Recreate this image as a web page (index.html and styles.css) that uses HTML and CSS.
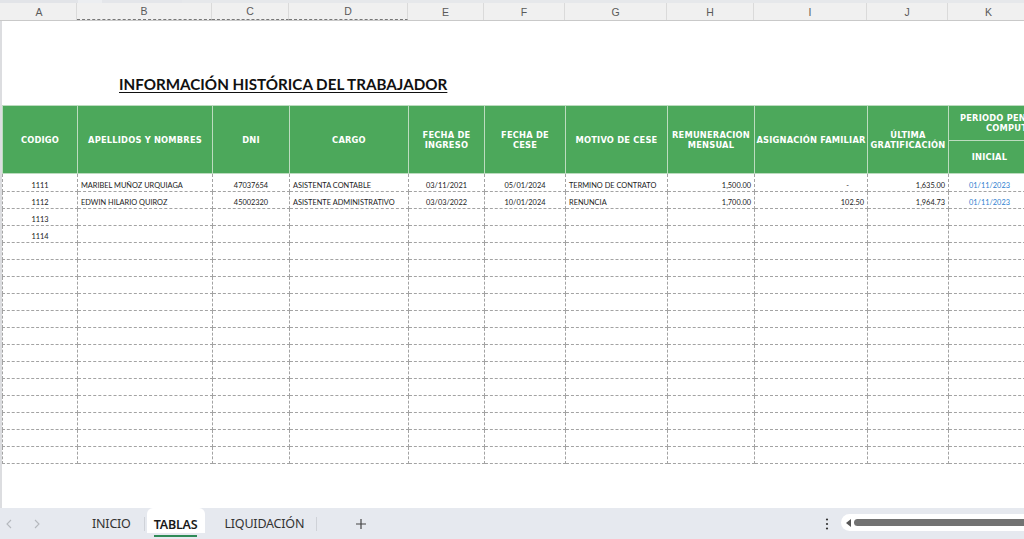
FILE: index.html
```html
<!DOCTYPE html>
<html lang="es">
<head>
<meta charset="utf-8">
<title>Tablas</title>
<link rel="stylesheet" href="styles.css">
</head>
<body>
<div class="app">
  <div class="topstrip"><span class="ts-a"></span><span class="ts-b"></span><span class="ts-c"></span></div>
  <div class="colhead">
    <div class="ch">A</div><div class="ch mark">B</div><div class="ch mark">C</div><div class="ch mark">D</div><div class="ch">E</div><div class="ch">F</div><div class="ch">G</div><div class="ch">H</div><div class="ch">I</div><div class="ch">J</div><div class="ch">K</div><div class="ch">L</div>
  </div>
  <div class="sheet">
    <div class="titlebox"><h1 class="title">INFORMACIÓN HISTÓRICA DEL TRABAJADOR</h1></div>
    <table class="grid">
      <colgroup>
        <col class="w-a"><col class="w-b"><col class="w-c"><col class="w-d"><col class="w-e"><col class="w-f"><col class="w-g"><col class="w-h"><col class="w-i"><col class="w-j"><col class="w-k"><col class="w-l">
      </colgroup>
      <thead>
        <tr class="h1">
          <th rowspan="2">CODIGO</th>
          <th rowspan="2">APELLIDOS Y NOMBRES</th>
          <th rowspan="2">DNI</th>
          <th rowspan="2">CARGO</th>
          <th rowspan="2">FECHA DE<br>INGRESO</th>
          <th rowspan="2">FECHA DE<br>CESE</th>
          <th rowspan="2">MOTIVO DE CESE</th>
          <th rowspan="2">REMUNERACION<br>MENSUAL</th>
          <th rowspan="2">ASIGNACIÓN FAMILIAR</th>
          <th rowspan="2">ÚLTIMA<br>GRATIFICACIÓN</th>
          <th colspan="2">PERIODO PENDIENTE DE<br>COMPUTABLE</th>
        </tr>
        <tr class="h2">
          <th>INICIAL</th>
          <th>FINAL</th>
        </tr>
      </thead>
      <tbody>
        <tr class="first">
          <td class="c">1111</td><td>MARIBEL MUÑOZ URQUIAGA</td><td class="c">47037654</td><td>ASISTENTA CONTABLE</td><td class="c">03/11/2021</td><td class="c">05/01/2024</td><td>TERMINO DE CONTRATO</td><td class="r">1,500.00</td><td class="r dash">-</td><td class="r">1,635.00</td><td class="c blue">01/11/2023</td><td></td>
        </tr>
        <tr>
          <td class="c">1112</td><td>EDWIN HILARIO QUIROZ</td><td class="c">45002320</td><td>ASISTENTE ADMINISTRATIVO</td><td class="c">03/03/2022</td><td class="c">10/01/2024</td><td>RENUNCIA</td><td class="r">1,700.00</td><td class="r">102.50</td><td class="r">1,964.73</td><td class="c blue">01/11/2023</td><td></td>
        </tr>
        <tr><td class="c">1113</td><td></td><td></td><td></td><td></td><td></td><td></td><td></td><td></td><td></td><td></td><td></td></tr>
        <tr><td class="c">1114</td><td></td><td></td><td></td><td></td><td></td><td></td><td></td><td></td><td></td><td></td><td></td></tr>
        <tr><td></td><td></td><td></td><td></td><td></td><td></td><td></td><td></td><td></td><td></td><td></td><td></td></tr>
        <tr><td></td><td></td><td></td><td></td><td></td><td></td><td></td><td></td><td></td><td></td><td></td><td></td></tr>
        <tr><td></td><td></td><td></td><td></td><td></td><td></td><td></td><td></td><td></td><td></td><td></td><td></td></tr>
        <tr><td></td><td></td><td></td><td></td><td></td><td></td><td></td><td></td><td></td><td></td><td></td><td></td></tr>
        <tr><td></td><td></td><td></td><td></td><td></td><td></td><td></td><td></td><td></td><td></td><td></td><td></td></tr>
        <tr><td></td><td></td><td></td><td></td><td></td><td></td><td></td><td></td><td></td><td></td><td></td><td></td></tr>
        <tr><td></td><td></td><td></td><td></td><td></td><td></td><td></td><td></td><td></td><td></td><td></td><td></td></tr>
        <tr><td></td><td></td><td></td><td></td><td></td><td></td><td></td><td></td><td></td><td></td><td></td><td></td></tr>
        <tr><td></td><td></td><td></td><td></td><td></td><td></td><td></td><td></td><td></td><td></td><td></td><td></td></tr>
        <tr><td></td><td></td><td></td><td></td><td></td><td></td><td></td><td></td><td></td><td></td><td></td><td></td></tr>
        <tr><td></td><td></td><td></td><td></td><td></td><td></td><td></td><td></td><td></td><td></td><td></td><td></td></tr>
        <tr><td></td><td></td><td></td><td></td><td></td><td></td><td></td><td></td><td></td><td></td><td></td><td></td></tr>
        <tr><td></td><td></td><td></td><td></td><td></td><td></td><td></td><td></td><td></td><td></td><td></td><td></td></tr>
      </tbody>
    </table>
  </div>
  <div class="tabbar">
    <div class="nav">
      <svg width="10" height="12" viewBox="0 0 10 12"><path d="M7 2 L3 6 L7 10" fill="none" stroke="#b5b8bd" stroke-width="1.1"/></svg>
      <svg width="10" height="12" viewBox="0 0 10 12"><path d="M3 2 L7 6 L3 10" fill="none" stroke="#b5b8bd" stroke-width="1.1"/></svg>
    </div>
    <div class="tab">INICIO</div>
    <div class="sep"></div>
    <div class="tab active"><span>TABLAS</span></div>
    <div class="tab">LIQUIDACIÓN</div>
    <div class="sep"></div>
    <div class="add">
      <svg width="12" height="12" viewBox="0 0 12 12"><path d="M6 1 V11 M1 6 H11" stroke="#444" stroke-width="1.2"/></svg>
    </div>
    <div class="spacer"></div>
    <div class="more">
      <svg width="4" height="14" viewBox="0 0 4 14"><circle cx="2" cy="2.5" r="1.1" fill="#333"/><circle cx="2" cy="7" r="1.1" fill="#333"/><circle cx="2" cy="11.5" r="1.1" fill="#333"/></svg>
    </div>
    <div class="hscroll">
      <svg width="6" height="8" viewBox="0 0 6 8"><path d="M5 0 L0 4 L5 8 Z" fill="#555"/></svg>
      <div class="thumb"></div>
    </div>
  </div>
</div>
</body>
</html>
```
FILE: styles.css
```css
html, body {
  margin: 0;
  padding: 0;
  width: 1024px;
  height: 539px;
  overflow: hidden;
  background: #ffffff;
}
.app {
  display: flex;
  flex-direction: column;
  width: 1024px;
  height: 539px;
  overflow: hidden;
}
.topstrip {
  height: 3px;
  display: flex;
  background: #e6e8eb;
  flex: none;
}
.ts-a { width: 78px; background: #e2e4e8; }
.ts-b { width: 24px; background: #eceef1; }
.ts-c { width: 80px; background: #e4e6ea; }

.colhead {
  flex: none;
  height: 17px;
  display: grid;
  grid-template-columns: 75px 135px 77px 119px 76px 81px 102px 87px 113px 81px 82px 58px;
  padding-left: 2px;
  background: #f0f0f0;
  border-bottom: 1px solid #c9c9c9;
  font-family: "Liberation Sans", Arial, sans-serif;
  font-size: 10.5px;
  color: #5a5a5a;
}
.ch {
  display: flex;
  align-items: center;
  justify-content: center;
  border-right: 1px solid #dadada;
  box-sizing: border-box;
}
.ch.mark {
  border-bottom: 1px dashed #777;
}

.sheet {
  flex: 1;
  background: #fff;
  border-left: 2px solid #dcdde0;
  overflow: hidden;
}
.titlebox {
  height: 84px;
  box-sizing: border-box;
  padding: 53px 0 0 117px;
}
.title {
  margin: 0;
  font-family: Lato, "Open Sans", sans-serif;
  font-weight: 700;
  font-size: 15.2px;
  line-height: 20px;
  color: #111;
  text-decoration: underline;
  text-decoration-thickness: 1px;
  text-underline-offset: 2px;
}

.grid {
  table-layout: fixed;
  border-collapse: collapse;
  width: 1086px;
}
.w-a { width: 75px; }
.w-b { width: 135px; }
.w-c { width: 77px; }
.w-d { width: 119px; }
.w-e { width: 76px; }
.w-f { width: 81px; }
.w-g { width: 102px; }
.w-h { width: 87px; }
.w-i { width: 113px; }
.w-j { width: 81px; }
.w-k { width: 82px; }
.w-l { width: 58px; }

.grid th {
  background: #4ca85b;
  color: #fff;
  font-family: "DejaVu Sans", Verdana, sans-serif;
  font-weight: 700;
  font-size: 8.3px;
  line-height: 10px;
  letter-spacing: 0.2px;
  text-align: center;
  vertical-align: middle;
  border: 1px solid #bcdcbf;
  padding: 0;
  white-space: nowrap;
  overflow: hidden;
}
.h1 { height: 35px; }
.h2 { height: 33px; }

.grid td {
  height: 16px;
  border: 1px dashed #a3a3a3;
  font-family: Lato, "Open Sans", sans-serif;
  font-size: 7.4px;
  color: #222;
  padding: 0 3px 0 3px;
  vertical-align: bottom;
  line-height: 10px;
  white-space: nowrap;
  overflow: hidden;
}
.grid tr.first td { height: 17px; }
.grid td.c { text-align: center; }
.grid td.r { text-align: right; }
.grid td.dash { padding-right: 18px; }
.grid td.blue { color: #2f7fd0; }

.tabbar {
  flex: none;
  height: 31px;
  background: #e6e9ef;
  display: flex;
  align-items: stretch;
  font-family: "Noto Sans", "Open Sans", sans-serif;
  font-size: 12.5px;
  color: #333;
}
.nav {
  width: 76px;
  display: flex;
  align-items: center;
  gap: 18px;
  padding-left: 4px;
  box-sizing: border-box;
}
.tab {
  display: flex;
  align-items: center;
  padding: 0 14px;
  letter-spacing: -0.2px;
}
.nav + .tab { padding-left: 16px; padding-right: 13px; }
.sep {
  width: 1px;
  background: #cfd2d8;
  margin: 9px 0 8px;
}
.tab.active {
  background: #fff;
  border-radius: 6px 6px 0 0;
  margin: 0 2px 6px 2px;
  padding: 0 8px 0 7px;
  font-weight: 600;
  color: #1a1a1a;
}
.tab.active span {
  border-bottom: 2px solid #2e8b57;
  padding: 5px 0 2px;
  margin-top: 6px;
}
.tab.active + .tab { padding-left: 17px; padding-right: 12px; }
.add {
  display: flex;
  align-items: center;
  padding-left: 38px;
}
.spacer { flex: 1; }
.more {
  display: flex;
  align-items: center;
  width: 16px;
}
.hscroll {
  width: 178px;
  margin: 6px 0 8px 0;
  background: #fff;
  border-radius: 9px 0 0 9px;
  display: flex;
  align-items: center;
  padding-left: 5px;
  gap: 2px;
}
.thumb {
  flex: 1;
  height: 7px;
  background: #727272;
  border-radius: 4px 0 0 4px;
}
```
